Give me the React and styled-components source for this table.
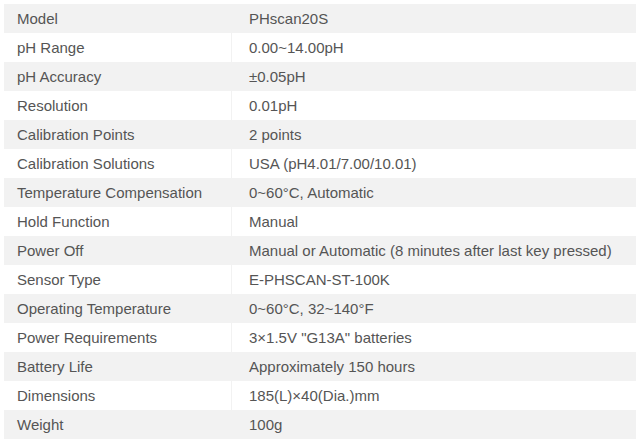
import React from "react";
import styled, { createGlobalStyle } from "styled-components";

const GlobalStyle = createGlobalStyle`
  body {
    margin: 0;
    background: #fff;
    font-family: "Liberation Sans", Arial, sans-serif;
  }
`;

const specs = [
  ["Model", "PHscan20S"],
  ["pH Range", "0.00~14.00pH"],
  ["pH Accuracy", "±0.05pH"],
  ["Resolution", "0.01pH"],
  ["Calibration Points", "2 points"],
  ["Calibration Solutions", "USA (pH4.01/7.00/10.01)"],
  ["Temperature Compensation", "0~60°C, Automatic"],
  ["Hold Function", "Manual"],
  ["Power Off", "Manual or Automatic (8 minutes after last key pressed)"],
  ["Sensor Type", "E-PHSCAN-ST-100K"],
  ["Operating Temperature", "0~60°C, 32~140°F"],
  ["Power Requirements", '3×1.5V "G13A" batteries'],
  ["Battery Life", "Approximately 150 hours"],
  ["Dimensions", "185(L)×40(Dia.)mm"],
  ["Weight", "100g"],
];

const App = () => {
  return (
    <>
      <GlobalStyle />
      <Wrap>
        <SpecTable>
          <tbody>
            {specs.map(([name, value], i) => (
              <Row key={name} striped={i % 2 === 0}>
                <NameCell>{name}</NameCell>
                <ValueCell>{value}</ValueCell>
              </Row>
            ))}
          </tbody>
        </SpecTable>
      </Wrap>
    </>
  );
};

const Wrap = styled.div`
  padding: 4px 7px 0 4px;
`;

const SpecTable = styled.table`
  width: 632px;
  border-collapse: collapse;
  font-size: 15px;
  color: #555;
`;

const Row = styled.tr.withConfig({
  shouldForwardProp: (p) => p !== "striped",
})`
  background: ${(p) => (p.striped ? "#f2f2f2" : "#fff")};
`;

const NameCell = styled.td`
  width: 214px;
  height: 29px;
  padding: 0 0 0 13px;
  border-right: 1px solid #f2f2f2;
  white-space: nowrap;
`;

const ValueCell = styled.td`
  height: 29px;
  padding: 0 0 0 17px;
  white-space: nowrap;
`;

export default App;
